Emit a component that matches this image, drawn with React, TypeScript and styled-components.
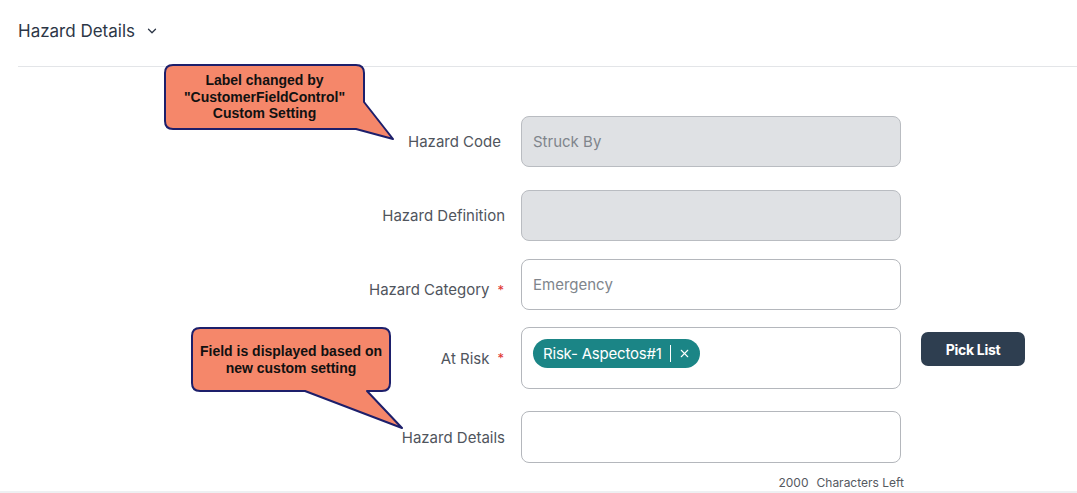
import React from "react";
import styled, { createGlobalStyle } from "styled-components";
import { ChevronDown, X } from "lucide-react";

const Global = createGlobalStyle`
  html, body { margin: 0; padding: 0; background: #ffffff; }
  body { font-family: Inter, "Noto Sans", Arial, sans-serif; }
  * { box-sizing: border-box; }
`;

const Page = styled.div`
  position: relative;
  width: 1077px;
  height: 493px;
  overflow: hidden;
  background: #fff;
  border-bottom: 2px solid #eef0f2;
`;

const Header = styled.div`
  display: flex;
  align-items: center;
  gap: 10px;
  height: 66px;
  padding-left: 18px;
  padding-bottom: 4px;
  color: #2c3646;
  font-size: 17px;
  font-weight: 400;
`;

const Divider = styled.div`
  margin-left: 18px;
  height: 1px;
  background: #e3e5e8;
`;

const Form = styled.div`
  display: flex;
  flex-direction: column;
  padding-top: 49px;
`;

const Row = styled.div<{ $mt?: number }>`
  display: grid;
  grid-template-columns: 505px 380px auto;
  column-gap: 16px;
  align-items: center;
  margin-top: ${(p) => p.$mt ?? 0}px;
`;

const Label = styled.div<{ $dy?: number }>`
  display: flex;
  justify-content: flex-end;
  align-items: center;
  gap: 8px;
  font-size: 15px;
  color: #50555d;
  padding-top: ${(p) => p.$dy ?? 0}px;
`;

const Star = styled.span`
  color: #e0322f;
  font-size: 13px;
  margin-right: 1px;
`;

const Field = styled.div<{ $disabled?: boolean; $h?: number; $top?: boolean }>`
  height: ${(p) => p.$h ?? 51}px;
  border: 1px solid ${(p) => (p.$disabled ? "#b9bcc1" : "#b4b7bc")};
  background: ${(p) => (p.$disabled ? "#dfe1e4" : "#ffffff")};
  border-radius: 8px;
  display: flex;
  align-items: ${(p) => (p.$top ? "flex-start" : "center")};
  padding: ${(p) => (p.$top ? "11px 11px" : "0 11px")};
  font-size: 15px;
  color: #80858c;
`;

const Chip = styled.div`
  display: inline-flex;
  align-items: center;
  height: 29px;
  padding: 0 9px 0 10px;
  border-radius: 15px;
  background: #1b8586;
  color: #fff;
  font-size: 15px;
  letter-spacing: -0.2px;
`;

const ChipSep = styled.span`
  width: 1px;
  height: 17px;
  background: #ffffff;
  margin: 0 7px 0 8px;
`;

const PickButton = styled.button`
  justify-self: start;
  align-self: start;
  margin: 5px 0 0 4px;
  width: 104px;
  height: 34px;
  border: none;
  border-radius: 7px;
  background: #2e3e50;
  color: #fff;
  font-family: Inter, Arial, sans-serif;
  font-weight: 700;
  font-size: 14px;
  letter-spacing: -0.3px;
`;

const Counter = styled.div`
  width: 904px;
  display: flex;
  justify-content: flex-end;
  gap: 8px;
  margin-top: 12px;
  font-size: 12px;
  color: #55595f;
`;

const CalloutSvg = styled.svg`
  position: absolute;
  overflow: visible;
`;

const CalloutText = styled.div`
  position: absolute;
  display: flex;
  align-items: center;
  justify-content: center;
  text-align: center;
  font-family: "Liberation Sans", Arial, sans-serif;
  font-weight: 700;
  font-size: 14px;
  line-height: 16.5px;
  color: #111;
`;

type CalloutProps = {
  box: { l: number; t: number; r: number; b: number };
  d: string;
  view: { x: number; y: number; w: number; h: number };
  lines: string[];
};

const Callout = ({ box, d, view, lines }: CalloutProps) => (
  <>
    <CalloutSvg
      style={{ left: view.x, top: view.y }}
      width={view.w}
      height={view.h}
      viewBox={`${view.x} ${view.y} ${view.w} ${view.h}`}
    >
      <path d={d} fill="#f5876a" stroke="#1d1f6b" strokeWidth={2} strokeLinejoin="round" />
    </CalloutSvg>
    <CalloutText
      style={{ left: box.l, top: box.t, width: box.r - box.l, height: box.b - box.t }}
    >
      <div>
        {lines.map((l, i) => (
          <div key={i}>{l}</div>
        ))}
      </div>
    </CalloutText>
  </>
);

export default function App() {
  return (
    <Page>
      <Global />
      <Header>
        Hazard Details
        <ChevronDown size={14} strokeWidth={2.2} color="#2c3646" />
      </Header>
      <Divider />
      <Form>
        <Row>
          <Label style={{ paddingRight: 4 }}>Hazard Code</Label>
          <Field $disabled>Struck By</Field>
        </Row>
        <Row $mt={23}>
          <Label>Hazard Definition</Label>
          <Field $disabled />
        </Row>
        <Row $mt={18}>
          <Label $dy={10}>
            Hazard Category <Star>*</Star>
          </Label>
          <Field>Emergency</Field>
        </Row>
        <Row $mt={17}>
          <Label>
            At Risk <Star>*</Star>
          </Label>
          <Field $h={62} $top>
            <Chip>
              Risk- Aspectos#1
              <ChipSep />
              <X size={13} strokeWidth={2} />
            </Chip>
          </Field>
          <PickButton>Pick List</PickButton>
        </Row>
        <Row $mt={22}>
          <Label>Hazard Details</Label>
          <Field $h={52} />
        </Row>
        <Counter>
          <span>2000</span>
          <span>Characters Left</span>
        </Counter>
      </Form>

      <Callout
        box={{ l: 165, t: 65, r: 364, b: 129 }}
        view={{ x: 160, y: 60, w: 240, h: 85 }}
        d="M173 65 H356 Q364 65 364 73 V102 L393 139 L356 129 H173 Q165 129 165 121 V73 Q165 65 173 65 Z"
        lines={["Label changed by", "\"CustomerFieldControl\"", "Custom Setting"]}
      />
      <Callout
        box={{ l: 192, t: 328, r: 390, b: 391 }}
        view={{ x: 188, y: 324, w: 220, h: 110 }}
        d="M200 328 H382 Q390 328 390 336 V383 Q390 391 382 391 H367 L402 428 L305 391 H200 Q192 391 192 383 V336 Q192 328 200 328 Z"
        lines={["Field is displayed based on", "new custom setting"]}
      />
    </Page>
  );
}
